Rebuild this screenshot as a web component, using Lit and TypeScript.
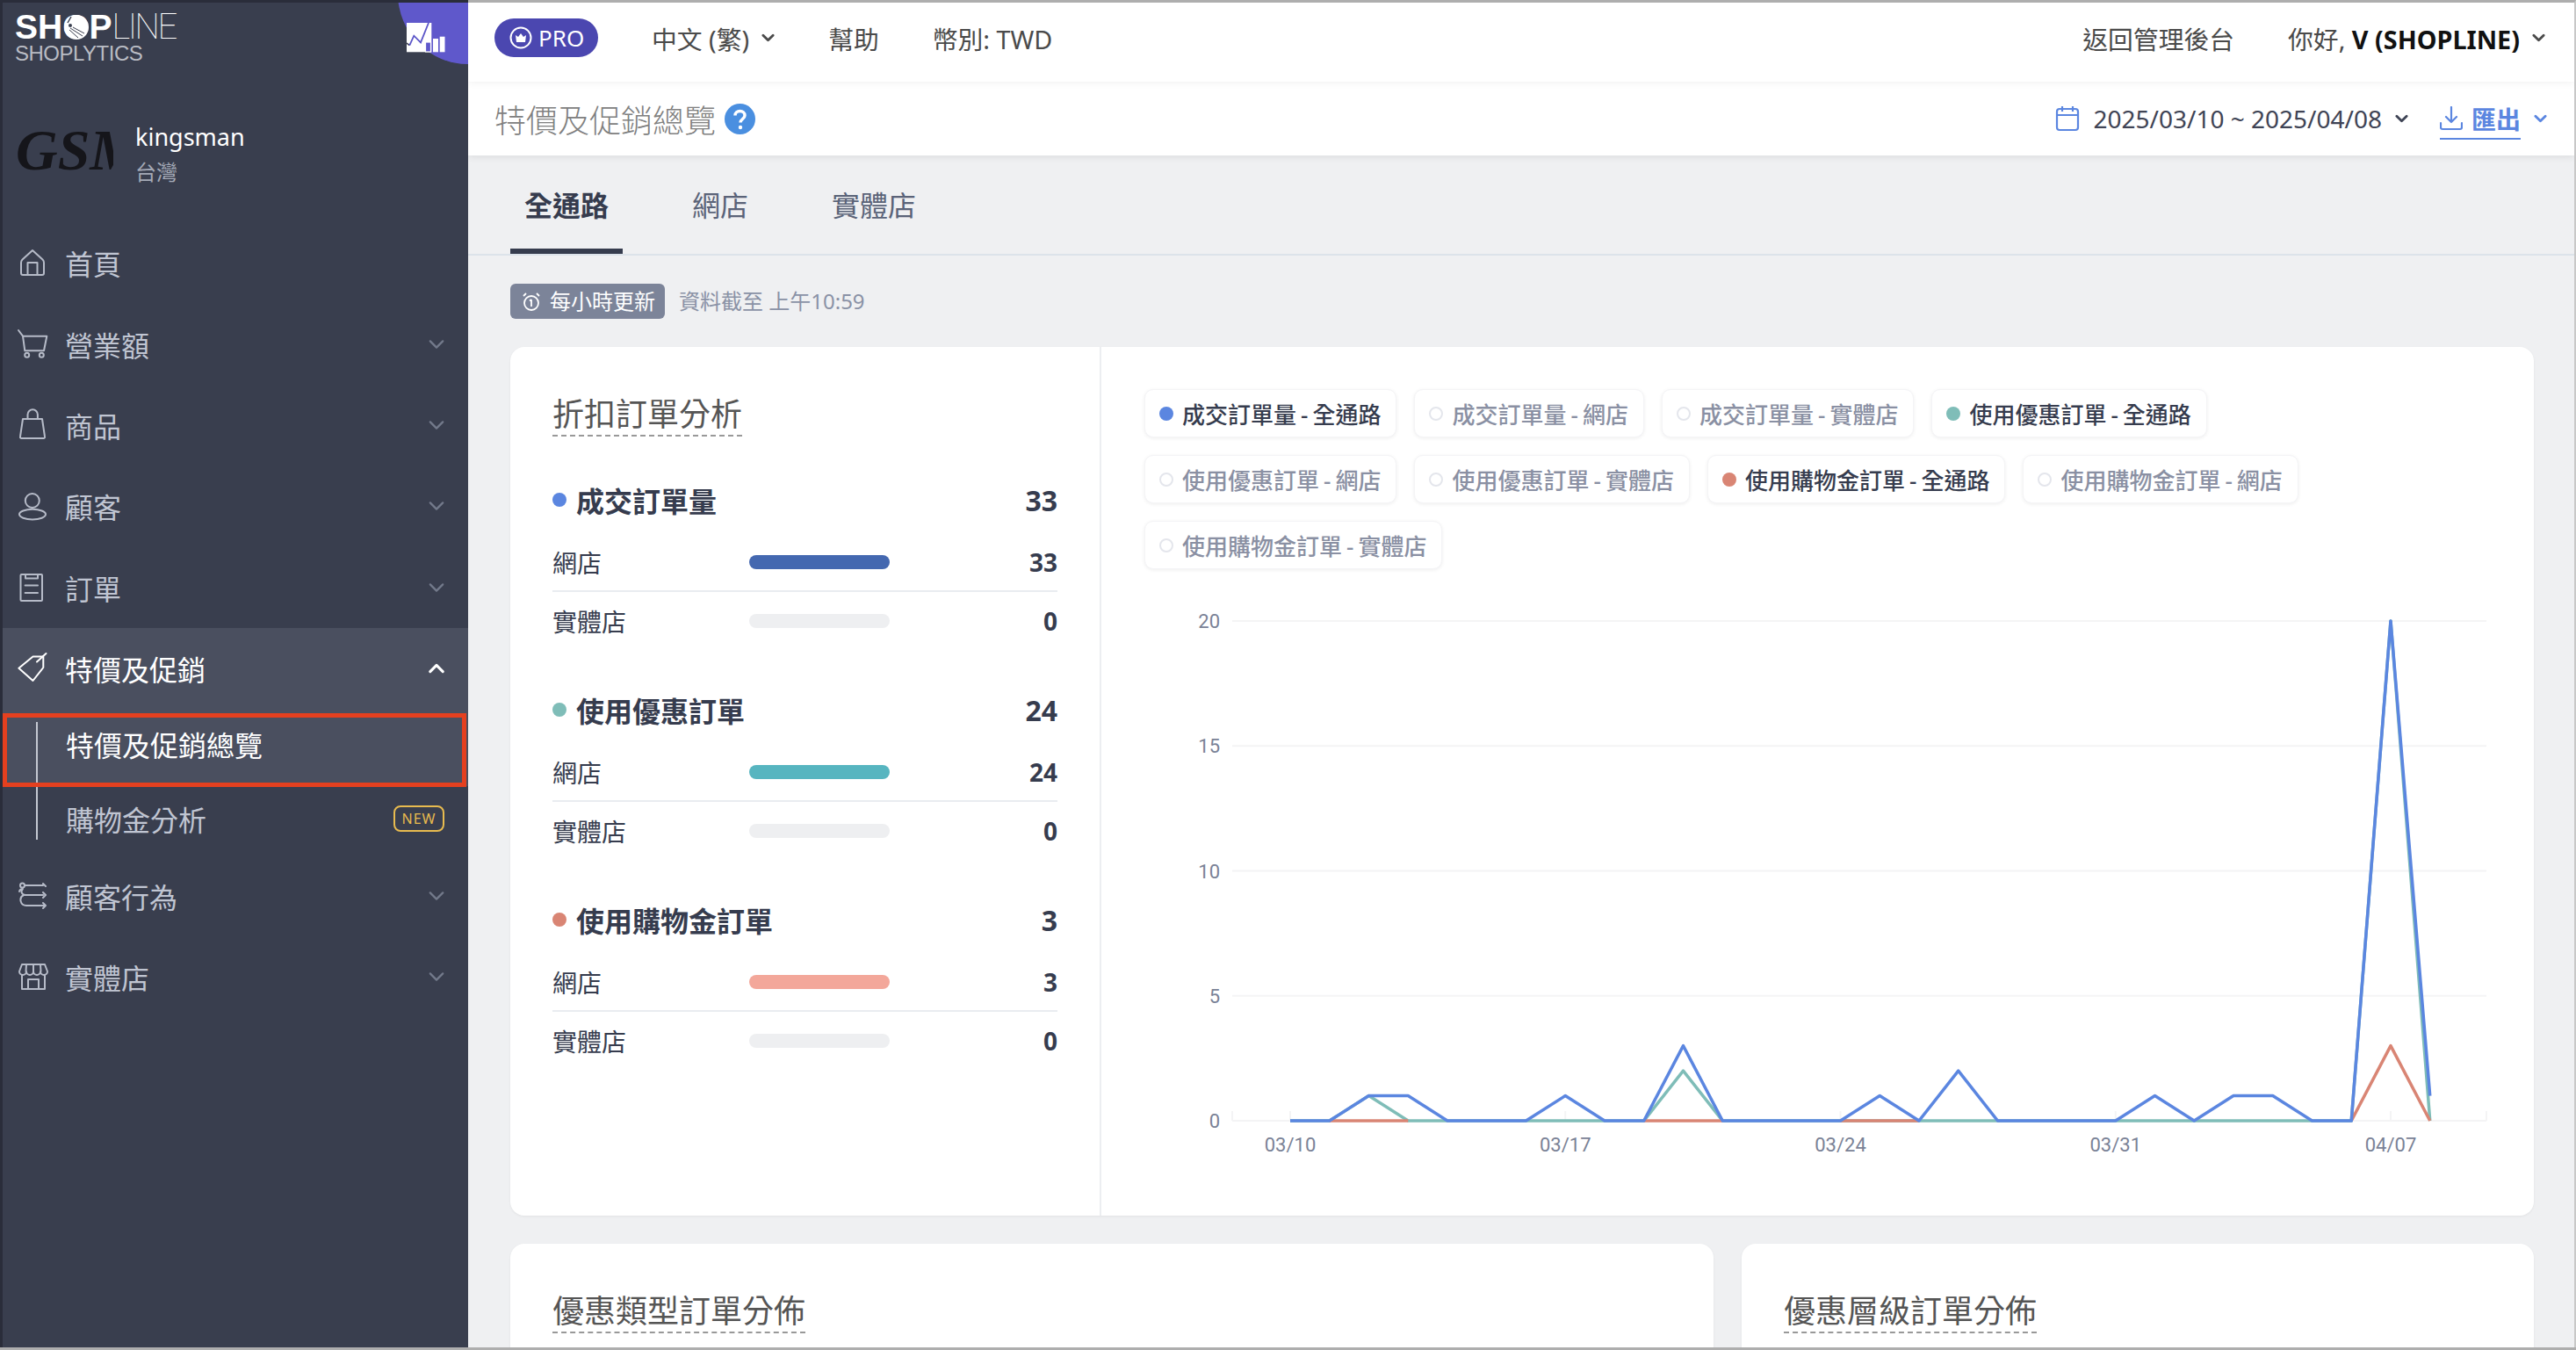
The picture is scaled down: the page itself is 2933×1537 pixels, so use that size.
import { LitElement, css, html, svg } from 'lit';
import { customElement } from 'lit/decorators.js';

const chevron = (cls = '') => html`<svg class="chev ${cls}" viewBox="0 0 16 10"><path d="M2 2l6 6 6-6" fill="none" stroke="currentColor" stroke-width="3" stroke-linecap="round" stroke-linejoin="round"/></svg>`;

const icons: Record<string, unknown> = {
  home: svg`<path d="M14 1L2.500 11.500Q1 13 1 15v12a2 2 0 0 0 2 2h22a2 2 0 0 0 2-2V15q0-2-1.500-3.500z"/><path d="M8.500 29V15h11v14"/>`,
  cart: svg`<path d="M-2-1L3 5.700 5.300 22.300H27L30.300 5.700H3"/><circle cx="7.700" cy="27.300" r="2.500"/><circle cx="24.300" cy="27.300" r="2.500"/>`,
  bag: svg`<path d="M3 8h22l3 20a1.500 1.500 0 0 1-1.500 2H1.500A1.500 1.500 0 0 1 0 28zM8.500 8V3a5.700 5.700 0 0 1 11.400 0v5"/>`,
  user: svg`<ellipse cx="13.800" cy="9" rx="8" ry="8"/><ellipse cx="14" cy="24.600" rx="15" ry="5.800"/>`,
  list: svg`<rect x="0.500" y="0" width="24.500" height="30" rx="1"/><path d="M6 0v4.500h14V0M5.600 12.600h14.400M5.600 21h14.400"/>`,
  tag: svg`<path d="M-1.600 14.700L14.500 1.500h11.800v12.500L14.500 29z"/><path d="M19 7.500L29.500-2"/>`,
  flow: svg`<circle cx="2.500" cy="3" r="2.500"/><path d="M5 3h21M26 1l3 3M-1 10a4 4 0 0 1 4-3M3 7c-3 3-1 7 3 7h20M26 11l3 3-3 3M4 14c-6 3-4 12 3 12h22M26 23l3 3-3 3"/>`,
  store: svg`<path d="M-1 9L2 1h26l3 8a4 4 0 0 1-8 0 4 4 0 0 1-8 0 4 4 0 0 1-8 0 4 4 0 0 1-8 0zM7 1l-.5 8M23 1l.5 8M15 1v8"/><path d="M2 13v16h26V13M9 29V18h12v11"/>`,
};

const navIcon = (name: string) => html`<svg class="nav-icon" viewBox="0 0 30 30" fill="none" stroke="currentColor" stroke-width="2" stroke-linejoin="round" stroke-linecap="round">${icons[name]}</svg>`;

const sections = [
  { name: '成交訂單量', total: 33, dot: '#5b86e0', bar: '#4468b0', online: 33 },
  { name: '使用優惠訂單', total: 24, dot: '#7fbdb8', bar: '#57b5c0', online: 24 },
  { name: '使用購物金訂單', total: 3, dot: '#d98574', bar: '#f3a79a', online: 3 },
];

const legend = [
  { label: '成交訂單量 - 全通路', color: '#5b86e0' },
  { label: '成交訂單量 - 網店' },
  { label: '成交訂單量 - 實體店' },
  { label: '使用優惠訂單 - 全通路', color: '#7fbdb8' },
  { label: '使用優惠訂單 - 網店' },
  { label: '使用優惠訂單 - 實體店' },
  { label: '使用購物金訂單 - 全通路', color: '#d98574' },
  { label: '使用購物金訂單 - 網店' },
  { label: '使用購物金訂單 - 實體店' },
];

// chart scale, in page pixels
const px = (i: number) => 1469 + 44.75 * i;
const py = (v: number) => 1276 - 28.45 * v;
const days = 30;
const blue: Record<number, number> = { 2: 1, 3: 1, 7: 1, 10: 3, 15: 1, 17: 2, 22: 1, 24: 1, 25: 1, 28: 20, 29: 1 };
const teal: Record<number, number> = { 2: 1, 10: 2, 28: 20 };
const line = (vals: Record<number, number>, from = 0, to = days - 1) => {
  const pts: string[] = [];
  for (let i = from; i <= to; i++) pts.push(`${px(i)},${py(vals[i] || 0)}`);
  return pts.join(' ');
};
const redParts = [[1, 3], [9, 11], [14, 16]];
const ticks = ['03/10', '03/17', '03/24', '03/31', '04/07'];

@customElement('app-root')
export class AppRoot extends LitElement {
  static styles = css`
    :host {
      display: block;
      height: 100vh;
      overflow: hidden;
      font-family: "Noto Sans", "Noto Sans CJK TC", sans-serif;
      color: #363c4e;
    }
    * { box-sizing: border-box; }
    .app {
      display: grid;
      grid-template-columns: 533px 1fr;
      height: 100%;
      border-bottom: 3px solid #aeaeae;
    }

    .side {
      position: relative;
      overflow: hidden;
      background: #393e4e;
      border-top: 3px solid #2a2d3a;
      border-left: 3px solid #2a2d3a;
      color: #c0c5d2;
    }
    .circle {
      position: absolute;
      right: -80px;
      top: -90px;
      width: 160px;
      height: 160px;
      border-radius: 50%;
      background: #5f58cb;
    }
    .circle svg {
      position: absolute;
      left: 10px;
      top: 113px;
      width: 46px;
      height: 34px;
    }
    .brand {
      padding: 11px 0 0 14px;
      height: 100px;
    }
    .brand-main {
      display: block;
      font: 700 39px/34px "Liberation Sans", sans-serif;
      color: #fff;
    }
    .brand-o {
      position: relative;
      display: inline-block;
    }
    .brand-o svg {
      position: absolute;
      left: 2px;
      top: 3px;
      width: 28px;
      height: 28px;
    }
    .brand-thin {
      font: 100 40px/34px Roboto, sans-serif;
      letter-spacing: -2.5px;
    }
    .brand-sub {
      display: block;
      font: 400 24px/26px "Liberation Sans", sans-serif;
      color: #b9bcc4;
      letter-spacing: -0.5px;
    }
    .store-row {
      display: flex;
      align-items: center;
      gap: 25px;
      padding-left: 14px;
      height: 136px;
      margin-bottom: 14px;
    }
    .store-logo {
      width: 112px;
      height: 46px;
      overflow: hidden;
      padding-left: 1px;
      font: italic 700 66px/46px "Liberation Serif", serif;
      color: #15151a;
      white-space: nowrap;
    }
    .store-text { margin-top: 10px; }
    .store-name {
      font-size: 27px;
      line-height: 40px;
      color: #fff;
    }
    .store-region {
      font-size: 24px;
      line-height: 40px;
      color: #a4a9b6;
    }
    .item {
      display: flex;
      align-items: center;
      height: 92.4px;
      padding: 0 26px 0 20px;
      font-size: 32px;
    }
    .item .label { flex: 1; margin-left: 21px; }
    .nav-icon { width: 30px; height: 30px; flex: none; overflow: visible; color: #b6bbc8; }
    .item .chev { width: 20px; height: 12px; color: #737a8b; }
    .item .chev path { stroke-width: 1.9; }
    .item .chev.up { transform: rotate(180deg); color: #fff; }
    .item .chev.up path { stroke-width: 2.6; }
    .group { background: #4a4f5f; color: #fff; }
    .group .nav-icon { color: #fff; }
    .subs {
      position: relative;
    }
    .subs::before {
      content: "";
      position: absolute;
      z-index: 1;
      left: 38px;
      top: 15px;
      width: 2px;
      height: 134px;
      background: #c4c8d2;
    }
    .sub {
      position: relative;
      display: flex;
      align-items: center;
      justify-content: space-between;
      padding: 0 27px 0 72px;
      font-size: 32px;
    }
    .sub.on {
      height: 88px;
      padding-bottom: 8px;
      background: #4a4f5f;
      color: #fff;
    }
    .sub.off { height: 78px; padding-bottom: 4px; }
    .mark {
      position: absolute;
      z-index: 2;
      left: 0;
      right: 2px;
      top: 5px;
      bottom: -1px;
      border: 5px solid #e5401f;
    }
    .new {
      width: 58px;
      height: 30px;
      border: 2px solid #e8bb4f;
      border-radius: 8px;
      color: #e8bb4f;
      font-size: 16px;
      line-height: 26px;
      letter-spacing: 1px;
      text-align: center;
    }

    .main {
      min-width: 0;
      overflow: hidden;
      background: #eff0f2;
      border-top: 3px solid #aeaeae;
      border-right: 2px solid #c8c8c8;
    }
    .topbar {
      position: relative;
      z-index: 2;
      display: flex;
      align-items: center;
      gap: 61px;
      height: 90px;
      padding: 0 33px 10px 30px;
      background: #fff;
      color: #4a4a4a;
      font-size: 28.8px;
      box-shadow: 0 2px 8px rgba(0, 0, 0, 0.05);
    }
    .pro {
      display: flex;
      align-items: center;
      gap: 7px;
      width: 118px;
      height: 44px;
      padding-left: 17px;
      border-radius: 22px;
      background: #4b47b0;
      color: #fff;
      font-size: 26px;
    }
    .pro svg { width: 26px; height: 26px; }
    .with-chev { display: flex; align-items: center; gap: 14px; }
    .chev { width: 15px; height: 10px; flex: none; }
    .spacer { flex: 1; }
    .topbar b { color: #111; font-weight: 700; }
    .pagehead {
      position: relative;
      z-index: 1;
      display: flex;
      align-items: center;
      height: 84px;
      padding: 0 31px 0 30px;
      background: #fff;
      box-shadow: 0 2px 8px rgba(0, 0, 0, 0.08);
    }
    .title {
      font-size: 36px;
      font-weight: 300;
      color: #808080;
    }
    .help { width: 35px; height: 35px; margin-left: 10px; }
    .range {
      display: flex;
      align-items: center;
      font-size: 28px;
      color: #3f4455;
      margin-right: 36px;
    }
    .range svg.cal { width: 28px; height: 30px; margin-right: 15px; }
    .range .chev { margin-left: 15px; }
    .export {
      display: flex;
      align-items: center;
      color: #5b86e0;
      font-size: 28px;
      font-weight: 700;
    }
    .export .link {
      display: flex;
      align-items: center;
      gap: 10px;
      height: 44px;
      border-bottom: 2px solid #5b86e0;
      margin-top: 4px;
      padding-bottom: 2px;
    }
    .export svg.dl { width: 26px; height: 28px; }
    .export .chev { margin-left: 15px; }

    .tabs {
      display: flex;
      gap: 63px;
      height: 114px;
      padding-left: 48px;
      border-bottom: 2px solid #dce3ea;
    }
    .tab {
      display: flex;
      align-items: center;
      padding: 0 16px 3px;
      border-top: 6px solid transparent;
      border-bottom: 6px solid transparent;
      font-size: 32px;
      color: #5a6378;
    }
    .tab.on {
      border-bottom-color: #363c4e;
      color: #363c4e;
      font-weight: 700;
    }
    .content { padding: 32px 46px 0 48px; }
    .status {
      display: flex;
      align-items: center;
      gap: 16px;
      height: 40px;
      font-size: 24px;
      color: #8a92a6;
    }
    .status span { margin-bottom: 3px; }
    .badge {
      display: flex;
      align-items: center;
      gap: 11px;
      height: 40px;
      width: 176px;
      padding-left: 14px;
      border-radius: 6px;
      background: #7c8499;
      color: #fff;
    }
    .badge svg { width: 20px; height: 24px; }
    .card {
      border-radius: 16px;
      background: #fff;
      box-shadow: 0 1px 3px rgba(0, 0, 0, 0.06);
    }
    .overview {
      display: grid;
      grid-template-columns: 673px 1fr;
      height: 989px;
      margin-top: 32px;
    }
    .stats {
      padding: 55px 48px 0;
      border-right: 2px solid #eceef1;
    }
    .head {
      display: inline-block;
      font-size: 36px;
      line-height: 44px;
      font-weight: 400;
      color: #555;
      padding-bottom: 1px;
      border-bottom: 2px dashed #999;
    }
    .section { margin-bottom: 46px; }
    .stats .head { margin-bottom: 50px; }
    .sec-head {
      display: flex;
      align-items: center;
      height: 44px;
      margin-bottom: 17px;
      font-size: 32px;
      font-weight: 700;
    }
    .dot {
      width: 16px;
      height: 16px;
      margin-right: 11px;
      border-radius: 50%;
      flex: none;
    }
    .sec-head .num { margin-left: auto; }
    .row {
      display: grid;
      grid-template-columns: 224px 160px 1fr;
      align-items: center;
      height: 66px;
      font-size: 28px;
    }
    .row.first { border-bottom: 2px solid #e9ecf0; }
    .row .num { text-align: right; font-weight: 700; }
    .track {
      height: 16px;
      border-radius: 8px;
      background: #eeeff1;
    }
    .chips {
      display: flex;
      flex-wrap: wrap;
      gap: 20px;
      padding: 48px 180px 0 49px;
    }
    .chip {
      display: flex;
      align-items: center;
      gap: 10px;
      height: 55px;
      padding: 0 17px 0 16px;
      border: 1px solid #f4f4f6;
      border-radius: 10px;
      background: #fff;
      box-shadow: 0 1px 4px rgba(0, 0, 0, 0.07);
      font-size: 26px;
      font-weight: 500;
      word-spacing: -1.7px;
      color: #8a90a3;
      white-space: nowrap;
    }
    .chip.on { color: #363c4e; }
    .chip .dot {
      margin: 0;
      border: 2px solid #e4e6ec;
    }
    .chip.on .dot { border: 0; }
    .plot {
      display: block;
      width: 1631px;
      height: 640px;
      margin-top: 42px;
    }
    .plot text {
      font: 22px Roboto, sans-serif;
      fill: #7a8296;
    }
    .lower {
      display: grid;
      grid-template-columns: 1370px 902px;
      gap: 32px;
      margin-top: 32px;
    }
    .lower .card {
      height: 300px;
      padding: 55px 48px 0;
    }
  `;

  render() {
    const nav = (icon: string, label: string) => html`
      <div class="item">${navIcon(icon)}<span class="label">${label}</span>${chevron()}</div>`;
    return html`
      <div class="app">
        <aside class="side">
          <div class="circle">
            <svg viewBox="0 0 46 34">
              <rect width="28.300" height="33.300" fill="#fff"/>
              <path d="M0 23L3.300 25.700" fill="none" stroke="#393e4e" stroke-width="1.500"/>
              <path d="M3.300 25.700L8.300 14.700 16 22.300 25 0" fill="none" stroke="#5b55c8" stroke-width="1.800"/>
              <rect x="21.500" y="22" width="6" height="11" fill="#5f58cb" stroke="#fff" stroke-width="1.200"/>
              <rect x="30" y="18" width="6" height="15.300" fill="#fff"/>
              <rect x="37.700" y="15.700" width="5.800" height="17.600" fill="#fff"/>
            </svg>
          </div>
          <div class="brand">
            <span class="brand-main">SH<span class="brand-o">O<svg viewBox="0 0 28 28"><circle cx="14" cy="14" r="14" fill="#fff"/><path d="M8 2L4 9" stroke="#393e4e" stroke-width="1.500"/><circle cx="7" cy="12" r="2" fill="#393e4e"/><path d="M7 15l14 9M6 17l10 9M10 14l13 7" stroke="#393e4e" stroke-width="1"/></svg></span>P<span class="brand-thin">LINE</span></span>
            <span class="brand-sub">SHOPLYTICS</span>
          </div>
          <div class="store-row">
            <div class="store-logo">GSM</div>
            <div class="store-text">
              <div class="store-name">kingsman</div>
              <div class="store-region">台灣</div>
            </div>
          </div>
          <nav>
            <div class="item">${navIcon('home')}<span class="label">首頁</span></div>
            ${nav('cart', '營業額')}
            ${nav('bag', '商品')}
            ${nav('user', '顧客')}
            ${nav('list', '訂單')}
            <div class="item group">${navIcon('tag')}<span class="label">特價及促銷</span>${chevron('up')}</div>
            <div class="subs">
              <div class="sub on">特價及促銷總覽<div class="mark"></div></div>
              <div class="sub off">購物金分析<span class="new">NEW</span></div>
            </div>
            ${nav('flow', '顧客行為')}
            ${nav('store', '實體店')}
          </nav>
        </aside>
        <main class="main">
          <header class="topbar">
            <div class="pro">
              <svg viewBox="0 0 26 26"><circle cx="13" cy="13" r="11.500" fill="none" stroke="#fff" stroke-width="2"/><path d="M7 10l3 2 3-4 3 4 3-2-1 8H8z" fill="#fff"/></svg>
              PRO
            </div>
            <div class="with-chev">中文 (繁)${chevron()}</div>
            <div>幫助</div>
            <div>幣別: TWD</div>
            <div class="spacer"></div>
            <div>返回管理後台</div>
            <div class="with-chev"><span>你好, <b>V (SHOPLINE)</b></span>${chevron()}</div>
          </header>
          <div class="pagehead">
            <span class="title">特價及促銷總覽</span>
            <svg class="help" viewBox="0 0 35 35"><circle cx="17.500" cy="17.500" r="17.500" fill="#4a8fe0"/><path d="M12 13.500c0-3 2.500-5 5.500-5s5.500 2 5.500 5c0 4-5 4-5 8" fill="none" stroke="#fff" stroke-width="3.500"/><circle cx="18" cy="27" r="2.200" fill="#fff"/></svg>
            <div class="spacer"></div>
            <div class="range">
              <svg class="cal" viewBox="0 0 28 30" fill="none" stroke="#5b86e0" stroke-width="2.200"><rect x="2" y="4" width="24" height="24" rx="3"/><path d="M2 11h24M8 1v6M20 1v6"/></svg>
              2025/03/10 ~ 2025/04/08${chevron()}
            </div>
            <div class="export">
              <span class="link">
                <svg class="dl" viewBox="0 0 26 28" fill="none" stroke="#5b86e0" stroke-width="2.200" stroke-linecap="round" stroke-linejoin="round"><path d="M13 1v17M7 12l6 6 6-6M1 19v5a2 2 0 0 0 2 2h20a2 2 0 0 0 2-2v-5"/></svg>
                匯出
              </span>
              ${chevron()}
            </div>
          </div>
          <div class="tabs">
            <div class="tab on">全通路</div>
            <div class="tab">網店</div>
            <div class="tab">實體店</div>
          </div>
          <div class="content">
            <div class="status">
              <div class="badge">
                <svg viewBox="0 0 20 24" fill="none" stroke="#fff" stroke-width="1.800"><circle cx="10" cy="14" r="8"/><path d="M10 10v8M8 11.500l2-1.500M1 6l3-3M19 6l-3-3"/></svg>
                <span>每小時更新</span>
              </div>
              <span>資料截至 上午10:59</span>
            </div>
            <section class="card overview">
              <div class="stats">
                <div class="head">折扣訂單分析</div>
                ${sections.map((s) => html`
                  <div class="section">
                    <div class="sec-head">
                      <span class="dot" style="background:${s.dot}"></span>${s.name}<span class="num">${s.total}</span>
                    </div>
                    <div class="row first">
                      <span>網店</span>
                      <div class="track" style="background:${s.bar}"></div>
                      <span class="num">${s.online}</span>
                    </div>
                    <div class="row">
                      <span>實體店</span>
                      <div class="track"></div>
                      <span class="num">0</span>
                    </div>
                  </div>`)}
              </div>
              <div>
                <div class="chips">
                  ${legend.map((l) => html`
                    <div class="chip ${l.color ? 'on' : ''}">
                      <span class="dot" style="background:${l.color || '#fff'}"></span>${l.label}
                    </div>`)}
                </div>
                ${this.renderPlot()}
              </div>
            </section>
            <div class="lower">
              <section class="card"><div class="head">優惠類型訂單分佈</div></section>
              <section class="card"><div class="head">優惠層級訂單分佈</div></section>
            </div>
          </div>
        </main>
      </div>
    `;
  }

  renderPlot() {
    const grid = '#f4f4f5';
    return html`
      <svg class="plot" viewBox="1254 690 1631 640" fill="none">
        ${[20, 15, 10, 5, 0].map((v) => svg`
          <line x1="1403" x2="2831" y1=${py(v)} y2=${py(v)} stroke=${grid} stroke-width="2"/>
          <text x="1389" y=${py(v) + 8} text-anchor="end">${v}</text>`)}
        ${[1403, 2831, ...ticks.map((_, i) => px(i * 7))].map((x) => svg`
          <line x1=${x} x2=${x} y1="1265" y2="1276" stroke=${grid} stroke-width="2"/>`)}
        ${ticks.map((t, i) => svg`<text x=${px(i * 7)} y="1311" text-anchor="middle">${t}</text>`)}
        <polyline points=${line(teal)} stroke="#7fbdb8" stroke-width="3.500" stroke-linejoin="round"/>
        ${redParts.map(([a, b]) => svg`<polyline points=${line({}, a, b)} stroke="#d98574" stroke-width="3.500"/>`)}
        <polyline points=${line({ 28: 3 }, 27, 29)} stroke="#d98574" stroke-width="3.500" stroke-linejoin="round"/>
        <polyline points=${line(blue)} stroke="#5b86e0" stroke-width="3.500" stroke-linejoin="round"/>
      </svg>`;
  }
}
